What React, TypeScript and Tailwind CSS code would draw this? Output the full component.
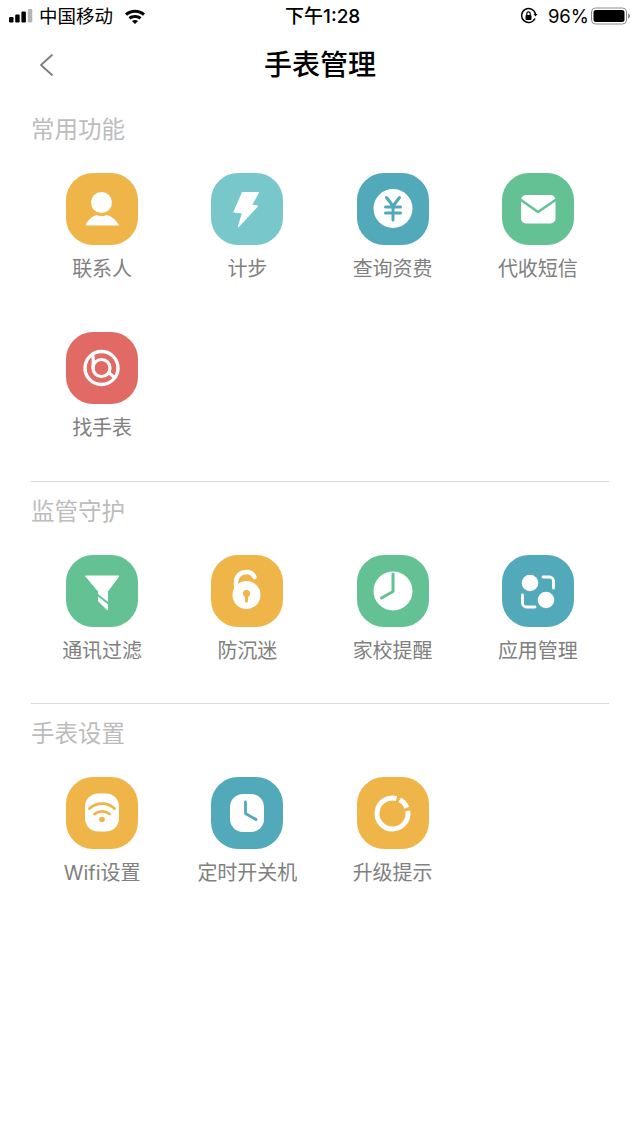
import type { ReactNode } from "react";

const W = "#ffffff";
const ORANGE = "bg-[#efb549]";
const AQUA = "bg-[#78c8cb]";
const TEAL = "bg-[#52a9b9]";
const GREEN = "bg-[#63c194]";
const RED = "bg-[#e26a64]";
const cTeal = "#52a9b9";
const cGreen = "#63c194";
const cOrange = "#efb549";

function Glyph({ children }: { children: ReactNode }) {
  return (
    <svg viewBox="0 0 72 72" className="w-[72px] h-[72px]" fill="none">
      {children}
    </svg>
  );
}

const icons = {
  contact: (
    <Glyph>
      <circle cx="35.500" cy="29.500" r="10.500" fill={W} />
      <path d="M19.500 52.500c1.500-5 6.500-9 11-10.500 3 1.500 7.500 1.500 10.500 0 5 1.500 10 5.500 12 10.500z" fill={W} />
    </Glyph>
  ),
  bolt: (
    <Glyph>
      <path d="M31.500 19.500h16L40.500 32l6 1L27.500 53.500 31.500 40l-8.500-1z" fill={W} stroke={W} strokeWidth="1.200" strokeLinejoin="round" />
    </Glyph>
  ),
  yen: (
    <Glyph>
      <circle cx="36" cy="35.500" r="19.500" fill={W} />
      <path d="M29.500 24.500l6.500 8.500 6.500-8.500M28.500 34h15M28.500 40h15M36 33v14" stroke={cTeal} strokeWidth="3" strokeLinecap="round" strokeLinejoin="round" />
    </Glyph>
  ),
  mail: (
    <Glyph>
      <rect x="19" y="22" width="34.500" height="28.500" rx="5" fill={W} />
      <path d="M19 27l17 12 17.500-12" stroke={cGreen} strokeWidth="2.500" strokeLinecap="round" strokeLinejoin="round" />
    </Glyph>
  ),
  find: (
    <Glyph>
      <circle cx="35.500" cy="36" r="16.500" stroke={W} strokeWidth="3.400" />
      <circle cx="35.500" cy="36" r="8.500" stroke={W} strokeWidth="3.200" />
      <path d="M26.500 23c1.500 3.500 .5 8.500 .5 13" stroke={W} strokeWidth="3.200" strokeLinecap="round" />
      <path d="M43 41l5 4" stroke={W} strokeWidth="3" strokeLinecap="round" />
    </Glyph>
  ),
  filter: (
    <Glyph>
      <path d="M19.500 21h33.500L41.500 36.500V55l-9-9V36.500z" fill={W} stroke={W} strokeWidth="1" strokeLinejoin="round" />
      <path d="M31 39.500l11.500 9" stroke={cGreen} strokeWidth="2" />
    </Glyph>
  ),
  lock: (
    <Glyph>
      <circle cx="35.500" cy="40" r="14" fill={W} />
      <path d="M25 32v-5c0-6 5-10 10.500-10 4 0 6.500 2 8 5" stroke={W} strokeWidth="4.400" strokeLinecap="round" />
      <circle cx="35.500" cy="38.500" r="3.500" fill={cOrange} />
      <path d="M35.500 39v7" stroke={cOrange} strokeWidth="3" strokeLinecap="round" />
    </Glyph>
  ),
  clock: (
    <Glyph>
      <circle cx="36" cy="36" r="19.500" fill={W} />
      <path d="M36 19v17.500L24.500 43" stroke={cGreen} strokeWidth="3" strokeLinecap="round" strokeLinejoin="round" />
    </Glyph>
  ),
  apps: (
    <Glyph>
      <circle cx="28" cy="28" r="8.300" fill={W} />
      <circle cx="44" cy="45" r="8.300" fill={W} />
      <path d="M41 22h6.500a4 4 0 0 1 4 4v7M20.500 40v8a4 4 0 0 0 4 4H33" stroke={W} strokeWidth="2.800" strokeLinecap="round" />
    </Glyph>
  ),
  wifi: (
    <Glyph>
      <rect x="19" y="16.500" width="34" height="38" rx="13" fill={W} />
      <path d="M23.500 31.500c7-6.500 18-6.500 25 0M28.500 37c4.500-3.500 10.500-3.500 15 0" stroke={cOrange} strokeWidth="2.800" strokeLinecap="round" />
      <circle cx="36" cy="42.500" r="2.800" fill={cOrange} />
    </Glyph>
  ),
  timer: (
    <Glyph>
      <rect x="19" y="17" width="34" height="38" rx="13" fill={W} />
      <path d="M34.500 25v11.500L45 42.500" stroke={cTeal} strokeWidth="2.800" strokeLinecap="round" strokeLinejoin="round" />
    </Glyph>
  ),
  upgrade: (
    <Glyph>
      <path d="M50.760 33.810A15.500 15.500 0 1 1 39.510 21.530" stroke={W} strokeWidth="5" />
      <path d="M42.780 22.810A15.500 15.500 0 0 1 49.870 30.690" stroke={W} strokeWidth="5" />
    </Glyph>
  ),
};

function Tile({ color, icon, label }: { color: string; icon: ReactNode; label: string }) {
  return (
    <div className="flex flex-col items-center">
      <div className={`w-[72px] h-[72px] rounded-[27px] ${color}`}>{icon}</div>
      <div className="mt-[10px] h-[28px] leading-[28px] text-[20px] text-[#808080] whitespace-nowrap">{label}</div>
    </div>
  );
}

function Title({ children }: { children: ReactNode }) {
  return <h2 className="h-[32px] leading-[32px] text-[23.500px] text-[#bcbcbc] font-normal">{children}</h2>;
}

function StatusBar() {
  return (
    <div className="h-[32px] flex items-center justify-between text-black relative">
      <div className="flex items-center pl-[9px]">
        <svg width="25" height="16" viewBox="0 0 25 16">
          <rect x="0" y="9" width="4.500" height="5.500" rx="1.200" fill="#000" />
          <rect x="6.200" y="6.500" width="4.500" height="8" rx="1.200" fill="#000" />
          <rect x="12.400" y="3.500" width="4.500" height="11" rx="1.200" fill="#000" />
          <rect x="18.800" y="1" width="4.500" height="13.500" rx="1.200" fill="#b4b4b4" />
        </svg>
        <span className="ml-[5px] text-[18.500px] leading-[24px]">中国移动</span>
        <svg className="ml-[11px]" width="22" height="16" viewBox="0 0 22 16">
          <path d="M1 5.500C6.500.5 15.500.5 21 5.500l-2 2.200c-4.500-4-11.500-4-16 0z" fill="#000" />
          <path d="M4.500 9.300c3.500-3 9.500-3 13 0l-2 2.100c-2.500-2-6.500-2-9 0z" fill="#000" />
          <path d="M8 13c1.700-1.400 4.300-1.400 6 0l-3 3z" fill="#000" />
        </svg>
      </div>
      <div className="absolute left-[285px] top-[5px] text-[19px] leading-[24px] font-medium">下午1:28</div>
      <div className="flex items-center pr-[9px]">
        <svg width="18" height="18" viewBox="0 0 18 18" fill="none">
          <path d="M15 11.500A7 7 0 1 1 15.500 7" stroke="#000" strokeWidth="1.500" />
          <path d="M13.500 7h4l-2 2.500z" fill="#000" />
          <rect x="5.500" y="8" width="6" height="5" rx="1" fill="#000" />
          <path d="M6.800 8V6.500a1.700 1.700 0 0 1 3.400 0V8" stroke="#000" strokeWidth="1.200" />
        </svg>
        <span className="ml-[10px] text-[18.500px] leading-[24px]">96%</span>
        <svg className="ml-[2px]" width="40" height="18" viewBox="0 0 40 18" fill="none">
          <rect x="0.500" y="1" width="35" height="16" rx="4" stroke="#8a8a8a" />
          <rect x="2.500" y="3" width="31" height="12" rx="2.500" fill="#000" />
          <path d="M37 6.500c1.300.4 2 1.300 2 2.500s-.7 2.100-2 2.500z" fill="#8a8a8a" />
        </svg>
      </div>
    </div>
  );
}

export default function App() {
  return (
    <div className="w-[640px] h-[1138px] bg-white overflow-hidden font-['Inter','Noto_Sans_CJK_SC',sans-serif]">
      <StatusBar />
      <header className="h-[66px] relative flex items-center justify-center">
        <svg className="absolute left-[38px] top-[21px]" width="16" height="24" viewBox="0 0 16 24" fill="none">
          <path d="M14 2L3 12l11 10" stroke="#7d7d7d" strokeWidth="1.800" strokeLinecap="round" strokeLinejoin="round" />
        </svg>
        <h1 className="text-[28px] leading-[40px] font-medium text-black">手表管理</h1>
      </header>

      <main className="px-[31px] pt-[16px]">
        <Title>常用功能</Title>
        <div className="grid grid-cols-4 gap-y-[49px] mt-[27px] -mx-[1.500px]">
          <Tile color={ORANGE} icon={icons.contact} label="联系人" />
          <Tile color={AQUA} icon={icons.bolt} label="计步" />
          <Tile color={TEAL} icon={icons.yen} label="查询资费" />
          <Tile color={GREEN} icon={icons.mail} label="代收短信" />
          <Tile color={RED} icon={icons.find} label="找手表" />
        </div>
        <div className="mt-[39px] h-px bg-[#d9d9d9]" />

        <div className="mt-[14px]">
          <Title>监管守护</Title>
        </div>
        <div className="grid grid-cols-4 mt-[27px] -mx-[1.500px]">
          <Tile color={GREEN} icon={icons.filter} label="通讯过滤" />
          <Tile color={ORANGE} icon={icons.lock} label="防沉迷" />
          <Tile color={GREEN} icon={icons.clock} label="家校提醒" />
          <Tile color={TEAL} icon={icons.apps} label="应用管理" />
        </div>
        <div className="mt-[38px] h-px bg-[#d9d9d9]" />

        <div className="mt-[14px]">
          <Title>手表设置</Title>
        </div>
        <div className="grid grid-cols-4 mt-[27px] -mx-[1.500px]">
          <Tile color={ORANGE} icon={icons.wifi} label="Wifi设置" />
          <Tile color={TEAL} icon={icons.timer} label="定时开关机" />
          <Tile color={ORANGE} icon={icons.upgrade} label="升级提示" />
        </div>
      </main>
    </div>
  );
}
